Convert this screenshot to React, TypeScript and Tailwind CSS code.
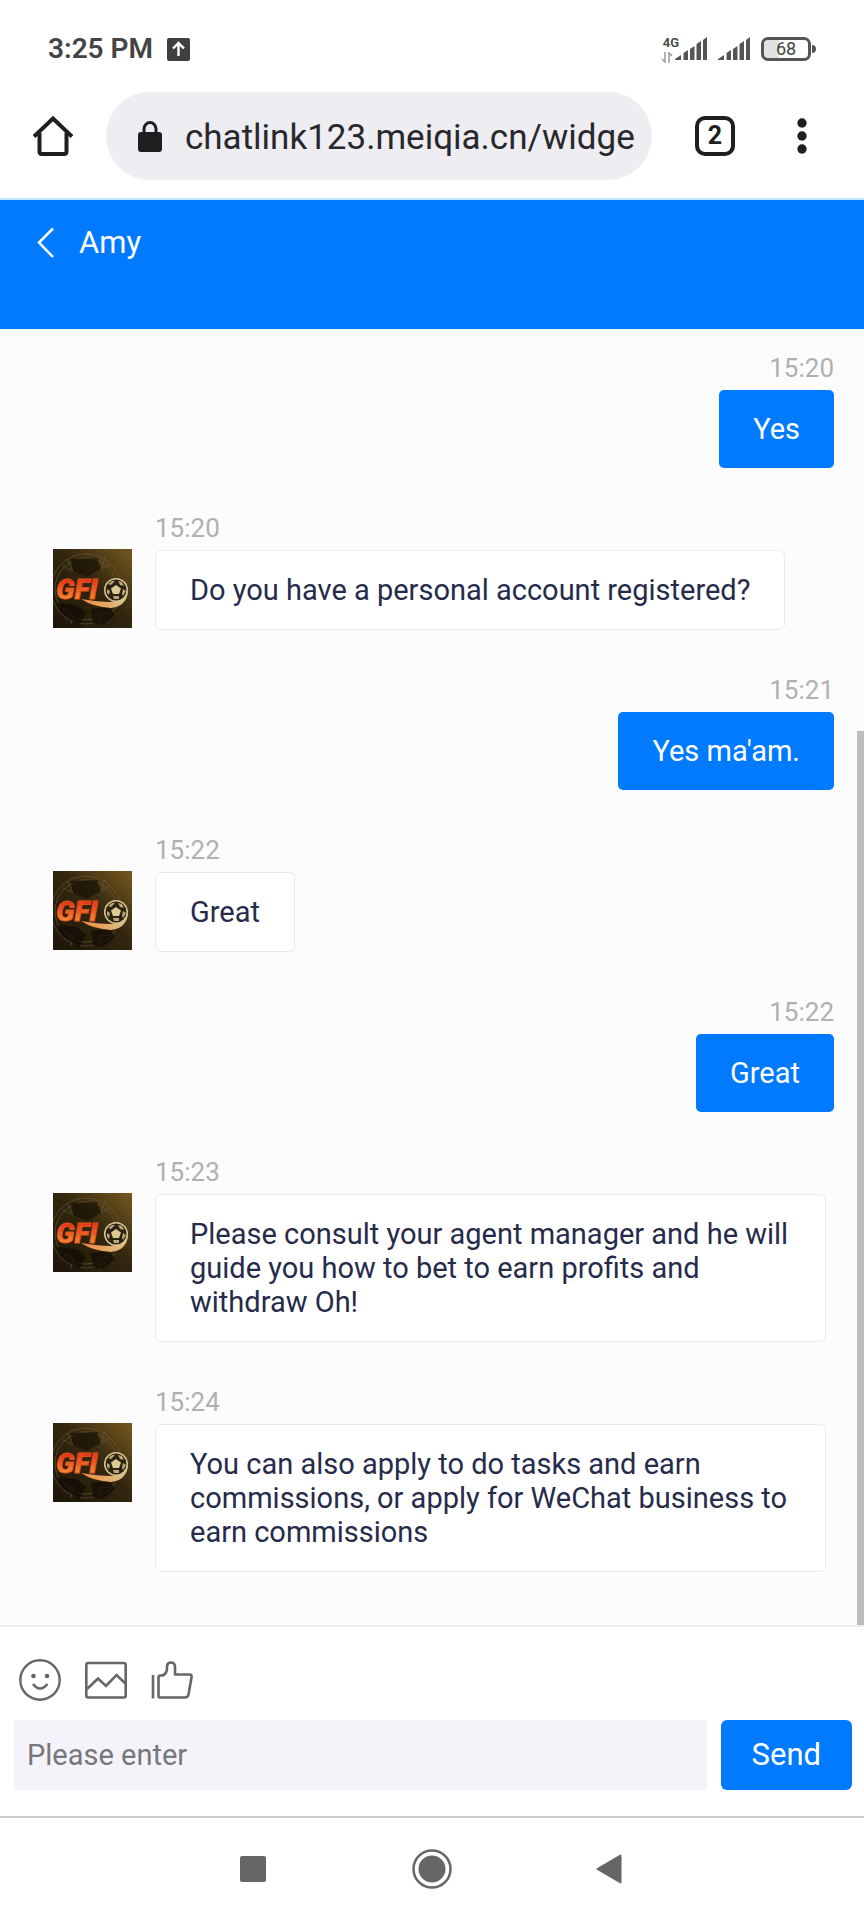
import { useId, useState } from 'react';

const messages = [
  { id: 1, mine: true, time: '15:20', text: 'Yes' },
  { id: 2, mine: false, time: '15:20', text: 'Do you have a personal account registered?' },
  { id: 3, mine: true, time: '15:21', text: "Yes ma'am." },
  { id: 4, mine: false, time: '15:22', text: 'Great' },
  { id: 5, mine: true, time: '15:22', text: 'Great' },
  {
    id: 6,
    mine: false,
    time: '15:23',
    text: 'Please consult your agent manager and he will guide you how to bet to earn profits and withdraw Oh!',
  },
  {
    id: 7,
    mine: false,
    time: '15:24',
    text: 'You can also apply to do tasks and earn commissions, or apply for WeChat business to earn commissions',
  },
];

function SignalBars() {
  return (
    <svg width="32" height="24" viewBox="0 0 32 24" fill="#555555" aria-hidden="true">
      <path d="M0 23V22L6 18V23Z" />
      <path d="M8.500 23V16L13 13V23Z" />
      <path d="M15 23V12L19.500 9V23Z" />
      <path d="M21.500 23V7L26 4V23Z" />
      <path d="M28 23V3L32 0V23Z" />
    </svg>
  );
}

function StatusBar() {
  return (
    <div className="mt-[33px] mb-[27px] flex h-8 items-center justify-between px-12 text-[#444444]">
      <div className="flex items-center gap-[14px]">
        <span className="text-[28px] leading-8 font-semibold">3:25 PM</span>
        <svg width="23" height="23" viewBox="0 0 23 23" aria-label="Upload">
          <rect width="23" height="23" rx="2" fill="#404040" />
          <path d="M11.500 18V5.500M6 10.500L11.500 5L17 10.500" fill="none" stroke="#fff" strokeWidth="2.400" />
        </svg>
      </div>
      <div className="flex items-center gap-[11px]">
        <div className="flex items-center">
          <div className="-mr-1 flex h-7 w-4 flex-col items-center justify-between">
            <span className="text-[13px] leading-4 font-semibold">4G</span>
            <svg width="12" height="11" viewBox="0 0 12 11" fill="none" stroke="#999999" strokeWidth="1.500" className="-ml-2">
              <path d="M4 0V10L1 7M8 11V1L11 4" />
            </svg>
          </div>
          <SignalBars />
        </div>
        <SignalBars />
        <div className="flex items-center">
          <span className="flex h-6 w-[50px] items-center justify-center rounded-[7px] border-3 border-[#555555] bg-linear-to-r from-[#e2e2e2] from-35% to-white to-35% text-[18px] leading-5">
            68
          </span>
          <span className="ml-px h-2 w-1 rounded-r-md bg-[#555555]" />
        </div>
      </div>
    </div>
  );
}

function BrowserBar() {
  return (
    <div className="flex items-center border-b-2 border-[#b9e5fd] pr-[57px] pb-[18px] pl-[33px]">
      <button aria-label="Home" className="mr-[33px] h-10 w-10 shrink-0">
        <svg width="40" height="40" viewBox="0 0 40 40" fill="none" stroke="#1f1f22" strokeWidth="4">
          <path d="M1 20.500L20 2.500L39 20.500" strokeLinejoin="miter" />
          <path d="M6.500 17V35.500Q6.500 38 9 38H31Q33.500 38 33.500 35.500V17" />
        </svg>
      </button>
      <div className="flex h-[88px] min-w-0 flex-1 items-center rounded-full bg-[#eeedf2] pr-4 pl-8">
        <svg width="24" height="31" viewBox="0 0 24 31" className="mr-[23px] shrink-0" aria-hidden="true">
          <rect y="11" width="24" height="20" rx="3" fill="#1f1f22" />
          <path d="M6 12V8A6 6.500 0 0 1 18 8V12" fill="none" stroke="#1f1f22" strokeWidth="3" />
        </svg>
        <input
          aria-label="Address"
          defaultValue="chatlink123.meiqia.cn/widge"
          className="min-w-0 flex-1 bg-transparent pt-1 text-[35px] leading-[44px] text-[#28282c] outline-none"
        />
      </div>
      <button
        aria-label="Tabs"
        className="ml-[43px] flex h-10 w-10 shrink-0 items-center justify-center rounded-[10px] border-4 border-[#1f1f22] text-[25px] leading-8 font-bold text-[#1f1f22]"
      >
        2
      </button>
      <button aria-label="Menu" className="ml-[62px] shrink-0">
        <svg width="10" height="36" viewBox="0 0 10 36" fill="#1f1f22">
          <circle cx="5" cy="5" r="4.700" />
          <circle cx="5" cy="18" r="4.700" />
          <circle cx="5" cy="31" r="4.700" />
        </svg>
      </button>
    </div>
  );
}

function Avatar() {
  const id = useId();
  return (
    <svg width="79" height="79" viewBox="0 0 79 79" className="shrink-0" role="img" aria-label="GFI">
      <defs>
        <linearGradient id={`${id}bg`} x1="0" y1="1" x2="1" y2="0">
          <stop offset="0" stopColor="#1c1608" />
          <stop offset="0.550" stopColor="#33270f" />
          <stop offset="1" stopColor="#75581f" />
        </linearGradient>
        <linearGradient id={`${id}fire`} x1="0" y1="0" x2="0" y2="1">
          <stop offset="0.200" stopColor="#e5321a" />
          <stop offset="0.900" stopColor="#f79a35" />
        </linearGradient>
        <linearGradient id={`${id}tail`} x1="0" y1="0" x2="1" y2="0">
          <stop offset="0" stopColor="#f08a3c" />
          <stop offset="1" stopColor="#d9c48c" />
        </linearGradient>
      </defs>
      <rect width="79" height="79" fill={`url(#${id}bg)`} />
      <g fill="none" stroke="#6b5b38" strokeOpacity="0.600" strokeWidth="1">
        <circle cx="33" cy="40" r="35" />
        <circle cx="33" cy="40" r="31" />
        <path d="M10 17L20 22M20 22L14 10M48 20L57 15M48 20L52 8M20 65L10 60M20 65L18 75M44 65L56 64M44 65L48 75" />
      </g>
      <path d="M18 10L44 9L48 20L34 28L20 22Z" fill="#171105" fillOpacity="0.700" />
      <path d="M4 54L24 56L33 64L26 77L8 64Z" fill="#100c04" fillOpacity="0.700" />
      <path d="M38 60L56 58L62 66L50 76L40 74Z" fill="#100c04" fillOpacity="0.700" />
      <path d="M28 50Q46 53 58 53Q70 52 75 42Q74 57 58 59Q40 58 28 50Z" fill={`url(#${id}tail)`} />
      <text
        x="3"
        y="50"
        fontSize="28"
        fontWeight="900"
        fontStyle="italic"
        fill={`url(#${id}fire)`}
        stroke="#e2551a"
        strokeWidth="0.800"
        className="font-[Roboto,sans-serif]"
      >
        GFI
      </text>
      <circle cx="63" cy="41" r="12" fill="#d9c592" />
      <circle cx="63" cy="41" r="10.500" fill="#2a2213" />
      <path d="M63 36L68 39.500L66 45H60L58 39.500Z" fill="#ddc990" />
      <path
        d="M55 35L59 32L62 32L58 36ZM65 32L69 33L71 37L67 36ZM70 40L73 42L70 47L69 45ZM54 40L57 42L56 46L54 44ZM60 47L66 47L66 50L61 50Z"
        fill="#b8a676"
      />
    </svg>
  );
}

function Message({ mine, time, text }: { mine: boolean; time: string; text: string }) {
  if (mine) {
    return (
      <div className="flex flex-col items-end">
        <time className="mb-1.5 text-[26px] leading-8 text-[#b0b0b0]">{time}</time>
        <p className="rounded-[5px] bg-[#007aff] px-[34px] py-[22px] text-[29px] leading-[34px] text-white">{text}</p>
      </div>
    );
  }
  return (
    <div className="flex items-start pr-2">
      <div className="mr-[23px] pt-[37px]">
        <Avatar />
      </div>
      <div className="flex min-w-0 flex-col items-start">
        <time className="mb-1.5 text-[26px] leading-8 text-[#b0b0b0]">{time}</time>
        <p className="rounded-md border border-[#eaeaee] bg-white px-[34px] py-[22px] text-[29px] leading-[34px] text-[#262b4a]">
          {text}
        </p>
      </div>
    </div>
  );
}

function Composer() {
  const [draft, setDraft] = useState('');
  return (
    <footer className="border-t-2 border-[#eeeeee] bg-white pt-8 pb-[26px]">
      <div className="flex items-center gap-6 pl-[19px]">
        <button aria-label="Emoji">
          <svg width="42" height="42" viewBox="0 0 42 42" fill="none" stroke="#666666" strokeWidth="2.400">
            <circle cx="21" cy="21" r="19.700" />
            <circle cx="14.500" cy="17" r="2.300" fill="#666666" stroke="none" />
            <circle cx="28" cy="17" r="2.300" fill="#666666" stroke="none" />
            <path d="M14 25Q21 34 28.500 25" strokeWidth="2.600" />
          </svg>
        </button>
        <button aria-label="Picture">
          <svg width="42" height="42" viewBox="0 0 42 42" fill="none" stroke="#666666" strokeWidth="2.600">
            <rect x="1.300" y="4" width="39.400" height="34.500" rx="2" />
            <path d="M2 30L13 19.500L21 27L31.500 16L41 25" />
          </svg>
        </button>
        <button aria-label="Rate">
          <svg width="42" height="42" viewBox="0 0 42 42" fill="none" stroke="#666666" strokeWidth="2.600" strokeLinejoin="round">
            <path d="M2 16V39.500" />
            <path d="M7.500 18.500Q7.500 16.500 9.500 16.500H11.500Q15.500 15 16 10V7Q16.500 3.500 20 3.500Q24 3.500 24 8V15.500H38.500Q41 15.500 40.500 18.500L37.500 35.500Q36.800 38.500 34 38.500H9Q7.500 38.500 7.500 37Z" />
          </svg>
        </button>
      </div>
      <div className="mt-[19px] flex gap-[14px] pr-3 pl-[14px]">
        <input
          aria-label="Message"
          placeholder="Please enter"
          value={draft}
          onChange={(e) => setDraft(e.target.value)}
          className="h-[70px] min-w-0 flex-1 bg-[#f4f3f9] px-[13px] text-[29px] text-[#262b4a] outline-none placeholder:text-[#77777a]"
        />
        <button
          onClick={() => setDraft('')}
          className="h-[70px] rounded-md bg-[#007aff] px-[31px] text-[31px] leading-10 text-white"
        >
          Send
        </button>
      </div>
    </footer>
  );
}

function SystemNav() {
  return (
    <nav className="grid h-[104px] grid-cols-3 items-center justify-items-center border-t-2 border-[#cfcfcf] px-[19%]">
      <button aria-label="Recent apps" className="h-[26px] w-[26px] rounded-xs bg-[#666666]" />
      <button aria-label="Home screen">
        <svg width="40" height="40" viewBox="0 0 40 40">
          <circle cx="20" cy="20" r="18.500" fill="none" stroke="#666666" strokeWidth="2.500" />
          <circle cx="20" cy="20" r="13.500" fill="#666666" />
        </svg>
      </button>
      <button aria-label="Back">
        <svg width="30" height="30" viewBox="0 0 30 30" fill="#666666" stroke="#666666" strokeWidth="2" strokeLinejoin="round">
          <path d="M1.500 15L24.500 1.500V28.500Z" />
        </svg>
      </button>
    </nav>
  );
}

export default function App() {
  return (
    <div className="flex min-h-screen flex-col bg-white font-[Roboto,sans-serif]">
      <StatusBar />
      <BrowserBar />
      <header className="flex items-center gap-[25px] bg-[#007aff] pt-[23px] pb-[66px] pl-[37px] text-white">
        <button aria-label="Back to chats">
          <svg width="17" height="32" viewBox="0 0 17 32" fill="none" stroke="currentColor" strokeWidth="2.500">
            <path d="M16 1.500L2 15.500L16 30" />
          </svg>
        </button>
        <h1 className="text-[31px] leading-10">Amy</h1>
      </header>
      <main className="relative flex flex-1 flex-col gap-11 bg-[#fcfcfc] pt-[23px] pr-[30px] pb-10 pl-[53px]">
        {messages.map((m) => (
          <Message key={m.id} mine={m.mine} time={m.time} text={m.text} />
        ))}
        {/* scroll thumb */}
        <div className="absolute right-0 bottom-0 h-[69%] w-[7px] bg-[#bdbdbd]" />
      </main>
      <Composer />
      <SystemNav />
    </div>
  );
}
